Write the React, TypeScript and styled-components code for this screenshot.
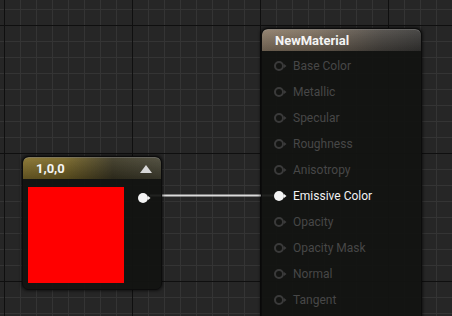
import styled, { createGlobalStyle } from "styled-components";

const GlobalStyle = createGlobalStyle`
  *, *::before, *::after {
    box-sizing: border-box;
  }
  html, body {
    margin: 0;
    padding: 0;
    background: #262626;
  }
  body {
    font-family: Roboto, "Liberation Sans", sans-serif;
  }
`;

const Canvas = styled.div`
  position: relative;
  width: 452px;
  height: 316px;
  overflow: hidden;
  background-color: #262626;
  background-image:
    linear-gradient(to right, #0f0f0f 1px, transparent 1px),
    linear-gradient(to bottom, #0f0f0f 1px, transparent 1px),
    linear-gradient(to right, #343434 1px, transparent 1px),
    linear-gradient(to bottom, #343434 1px, transparent 1px);
  background-size: 128px 128px, 128px 128px, 16px 16px, 16px 16px;
  background-position: 4px 25px, 4px 25px, 4px 9px, 4px 9px;
`;

const Node = styled.div<{ $x: number; $y: number; $w: number; $h: number }>`
  position: absolute;
  left: ${(p) => p.$x}px;
  top: ${(p) => p.$y}px;
  width: ${(p) => p.$w}px;
  height: ${(p) => p.$h}px;
  display: flex;
  flex-direction: column;
  border-radius: 6px;
  background: rgba(18, 19, 17, 0.93);
  border: 1px solid #0c0c0c;
  box-shadow: 0 0 3px 1px rgba(0, 0, 0, 0.55);
  overflow: hidden;
`;

const Header = styled.div<{ $tint: "material" | "constant" }>`
  height: 22px;
  flex-shrink: 0;
  display: flex;
  align-items: center;
  justify-content: space-between;
  padding: 0 8px 0 13px;
  border-top: 1px solid rgba(200, 200, 200, 0.35);
  border-radius: 6px 6px 0 0;
  color: #f4f4f4;
  font-weight: 700;
  font-size: 13px;
  background: ${(p) =>
    p.$tint === "material"
      ? "linear-gradient(to bottom, rgba(255,255,255,0.08), rgba(0,0,0,0.25)), linear-gradient(to right, #8c7b67 0%, #7a6c5c 35%, #4c4843 75%, #3a3937 100%)"
      : "linear-gradient(to bottom, rgba(255,255,255,0.06), rgba(0,0,0,0.3)), linear-gradient(to right, #86722e 0%, #7a6828 30%, #3e3a26 65%, #4a4838 100%)"};
`;

const Collapse = styled.span`
  width: 0;
  height: 0;
  border-left: 6px solid transparent;
  border-right: 6px solid transparent;
  border-bottom: 8px solid #d8d8d8;
  margin-right: 1px;
`;

const PinList = styled.div`
  display: flex;
  flex-direction: column;
  padding-top: 2px;
`;

const PinRow = styled.div<{ $active?: boolean }>`
  height: 26px;
  display: flex;
  align-items: center;
  gap: 6px;
  padding-left: 11px;
  font-size: 12px;
  color: ${(p) => (p.$active ? "#f2f2f2" : "#474747")};
`;

const Body = styled.div`
  display: flex;
  align-items: flex-start;
  justify-content: space-between;
  padding: 8px 10px 0 5px;
`;

const Swatch = styled.div`
  width: 96px;
  height: 96px;
  background: #ff0000;
`;

const OutPin = styled.div`
  margin-top: 2px;
`;

const Wire = styled.svg`
  position: absolute;
  left: 0;
  top: 0;
  pointer-events: none;
`;

const Pin = ({ on }: { on?: boolean }) => (
  <svg width="14" height="12" viewBox="0 0 14 12">
    {on ? (
      <circle cx="6" cy="6" r="5" fill="#f4f4f4" />
    ) : (
      <circle cx="6" cy="6" r="4" fill="none" stroke="#3a3a3a" strokeWidth="2" />
    )}
    <polygon points="11,4 13.5,6 11,8" fill={on ? "#f4f4f4" : "#3a3a3a"} />
  </svg>
);

const inputs = [
  "Base Color",
  "Metallic",
  "Specular",
  "Roughness",
  "Anisotropy",
  "Emissive Color",
  "Opacity",
  "Opacity Mask",
  "Normal",
  "Tangent",
];

export default function App() {
  return (
    <>
      <GlobalStyle />
      <Canvas>
        <Wire width="452" height="316">
          <line x1="150" y1="195.5" x2="274" y2="195.5" stroke="#dcdcdc" strokeWidth="2" />
        </Wire>
        <Node $x={261} $y={28} $w={161} $h={310}>
          <Header $tint="material">NewMaterial</Header>
          <PinList>
            {inputs.map((name) => (
              <PinRow key={name} $active={name === "Emissive Color"}>
                <Pin on={name === "Emissive Color"} />
                {name}
              </PinRow>
            ))}
          </PinList>
        </Node>
        <Node $x={22} $y={156} $w={140} $h={134}>
          <Header $tint="constant">
            1,0,0
            <Collapse />
          </Header>
          <Body>
            <Swatch />
            <OutPin>
              <Pin on />
            </OutPin>
          </Body>
        </Node>
      </Canvas>
    </>
  );
}
